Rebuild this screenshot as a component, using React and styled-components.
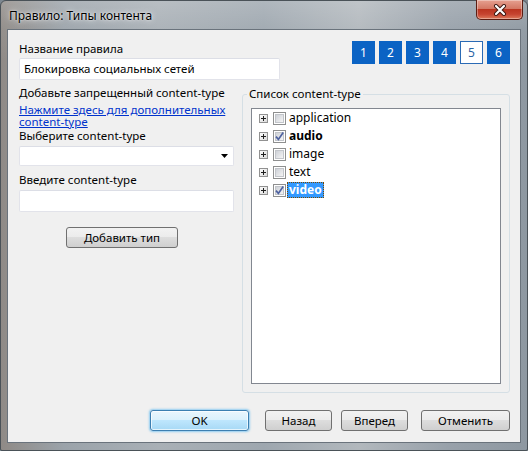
import React from "react";
import styled, { createGlobalStyle } from "styled-components";

const Global = createGlobalStyle`
  html, body { margin: 0; padding: 0; }
  body {
    width: 528px; height: 451px; overflow: hidden;
    background: #7d8790;
    font-family: "Noto Sans", "Open Sans", sans-serif;
    font-size: 11.5px;
    color: #000;
  }
  * { box-sizing: border-box; }
`;

const Frame = styled.div`
  width: 528px;
  height: 451px;
  display: flex;
  flex-direction: column;
  border: 1px solid #4a5258;
  border-radius: 6px 6px 2px 2px;
  background:
    linear-gradient(180deg, rgba(255,255,255,0.18) 0px, rgba(255,255,255,0.05) 28px, rgba(0,0,0,0) 60px),
    linear-gradient(90deg, #8f8a86 0%, #9ba3aa 12%, #a9b0b6 30%, #9ea7af 50%, #b2b8bd 68%, #98a1aa 85%, #8e98a1 100%);
`;

const TitleBar = styled.div`
  height: 28px;
  display: flex;
  align-items: flex-start;
  justify-content: space-between;
  padding: 0 4px 0 8px;
`;

const Title = styled.div`
  margin-top: 7px;
  font-size: 12px;
  line-height: 15px;
  color: #000;
  text-shadow: 0 0 6px rgba(255,255,255,0.9), 0 0 2px rgba(255,255,255,0.8);
`;

const CloseButton = styled.div`
  width: 47px;
  height: 20px;
  margin-top: -1px;
  border: 1px solid #5c1d12;
  border-top: none;
  border-radius: 0 0 5px 5px;
  display: flex;
  align-items: center;
  justify-content: center;
  background: linear-gradient(180deg, #e6a090 0%, #d47864 45%, #bb3520 50%, #c64430 75%, #dc7a5c 100%);
  box-shadow: inset 0 0 0 1px rgba(255,255,255,0.35);
`;

const Client = styled.div`
  flex: 1;
  margin: 0 6px 7px 6px;
  border: 1px solid #6a737c;
  background: #f0f0f0;
  padding: 11px 10px 0 11px;
  display: flex;
  flex-direction: column;
`;

const Header = styled.div`
  display: flex;
  justify-content: space-between;
  align-items: flex-start;
`;

const Field = styled.div`
  display: flex;
  flex-direction: column;
`;

const Label = styled.div`
  line-height: ${(p) => p.$lh || 14}px;
  margin-top: ${(p) => p.$mt || 0}px;
  white-space: nowrap;
`;

const TextBox = styled.div`
  width: ${(p) => p.$w}px;
  height: ${(p) => p.$h || 22}px;
  margin-top: ${(p) => p.$mt || 0}px;
  background: #fff;
  border: 1px solid #e2e3ea;
  border-top-color: #dcdee6;
  border-radius: 2px;
  padding: 0 4px;
  display: flex;
  align-items: center;
  line-height: 14px;
`;

const SelectBox = styled(TextBox)`
  justify-content: flex-end;
  padding-right: 5px;
`;

const Pager = styled.div`
  display: flex;
  gap: 4px;
`;

const PageButton = styled.div`
  width: 23px;
  height: 23px;
  display: flex;
  align-items: center;
  justify-content: center;
  font-size: 12px;
  background: ${(p) => (p.$active ? "#ffffff" : "#0b63c4")};
  color: ${(p) => (p.$active ? "#2c64a4" : "#ffffff")};
  border: 1px solid ${(p) => (p.$active ? "#2a6ab5" : "#0b63c4")};
`;

const Body = styled.div`
  display: grid;
  grid-template-columns: 215px 268px;
  column-gap: 8px;
  margin-top: 6px;
`;

const LeftCol = styled.div`
  display: flex;
  flex-direction: column;
  align-items: flex-start;
`;

const Link = styled.a`
  display: block;
  margin-top: 4px;
  width: 215px;
  line-height: 12px;
  color: #0033cc;
  text-decoration: underline;
  cursor: pointer;
`;

const Button = styled.div`
  width: ${(p) => p.$w}px;
  height: 21px;
  margin-left: ${(p) => p.$ml || 0}px;
  margin-top: ${(p) => p.$mt || 0}px;
  border: 1px solid ${(p) => (p.$default ? "#3c7fb1" : "#707070")};
  border-radius: 3px;
  display: flex;
  align-items: center;
  justify-content: center;
  line-height: 14px;
  color: #000;
  background: ${(p) =>
    p.$default
      ? "linear-gradient(180deg, #eaf6fd 0%, #d9f0fc 50%, #bee6fd 50%, #a7d9f5 100%)"
      : "linear-gradient(180deg, #f2f2f2 0%, #ebebeb 50%, #dddddd 50%, #cfcfcf 100%)"};
  box-shadow: inset 0 0 0 1px ${(p) => (p.$default ? "rgba(255,255,255,0.7)" : "rgba(255,255,255,0.8)")},
    ${(p) => (p.$default ? "0 0 2px 1px rgba(80,180,240,0.6)" : "none")};
`;

const Group = styled.fieldset`
  margin: 1px 0 0 0;
  padding: 7px 8px 8px 8px;
  border: 1px solid #d5dfe5;
  border-radius: 3px;
  min-width: 0;
`;

const Legend = styled.legend`
  padding: 0 2px;
  margin-left: -4px;
  line-height: 14px;
`;

const Tree = styled.div`
  height: 276px;
  background: #fff;
  border: 1px solid #828790;
  padding: 0 0 0 7px;
  display: flex;
  flex-direction: column;
`;

const TreeRow = styled.div`
  height: 18px;
  display: flex;
  align-items: center;
`;

const Expander = styled.svg`
  width: 9px;
  height: 9px;
  flex: none;
`;

const Check = styled.svg`
  width: 13px;
  height: 13px;
  margin-left: 5px;
  flex: none;
`;

const ItemText = styled.span`
  margin-left: 1px;
  padding: 0 1px;
  height: 16px;
  line-height: 14px;
  font-size: 12px;
  font-weight: ${(p) => (p.$bold ? 700 : 400)};
  color: ${(p) => (p.$selected ? "#fff" : "#000")};
  background: ${(p) => (p.$selected ? "#3399ff" : "transparent")};
  border: 1px dotted ${(p) => (p.$selected ? "#7a4a00" : "transparent")};
`;

const Footer = styled.div`
  display: flex;
  justify-content: flex-end;
  margin-top: 17px;
`;

const PlusIcon = () => (
  <Expander viewBox="0 0 9 9">
    <defs>
      <linearGradient id="exg" x1="0" y1="0" x2="1" y2="1">
        <stop offset="0" stopColor="#ffffff" />
        <stop offset="1" stopColor="#d8d8d8" />
      </linearGradient>
    </defs>
    <rect x="0.5" y="0.5" width="8" height="8" fill="url(#exg)" stroke="#919191" />
    <path d="M2 4.5H7M4.5 2V7" stroke="#1e1e1e" strokeWidth="1" />
  </Expander>
);

const CheckBox = ({ checked }) => (
  <Check viewBox="0 0 13 13">
    <defs>
      <linearGradient id="cbg" x1="0" y1="0" x2="1" y2="1">
        <stop offset="0" stopColor="#cbcfd5" />
        <stop offset="1" stopColor="#f7f7f7" />
      </linearGradient>
    </defs>
    <rect x="0.5" y="0.5" width="12" height="12" fill="#fff" stroke="#8e8f8f" />
    <rect x="2.5" y="2.5" width="8" height="8" fill="url(#cbg)" stroke="#c2c5ca" />
    {checked && (
      <path d="M3 6.6L5.4 9.4L10.2 2.6" fill="none" stroke="#4e62a0" strokeWidth="1.7" />
    )}
  </Check>
);

const items = [
  { name: "application" },
  { name: "audio", checked: true, bold: true },
  { name: "image" },
  { name: "text" },
  { name: "video", checked: true, bold: true, selected: true },
];

export default function App() {
  return (
    <>
      <Global />
      <Frame>
        <TitleBar>
          <Title>Правило: Типы контента</Title>
          <CloseButton>
            <svg width="16" height="12" viewBox="0 0 16 12">
              <path d="M4 2L12 10M12 2L4 10" stroke="#3b1710" strokeWidth="4" strokeLinecap="round" />
              <path d="M4 2L12 10M12 2L4 10" stroke="#ffffff" strokeWidth="2.2" strokeLinecap="round" />
            </svg>
          </CloseButton>
        </TitleBar>
        <Client>
          <Header>
            <Field>
              <Label $lh={15}>Название правила</Label>
              <TextBox $w={261} $mt={2}>Блокировка социальных сетей</TextBox>
            </Field>
            <Pager>
              {[1, 2, 3, 4, 5, 6].map((n) => (
                <PageButton key={n} $active={n === 5}>{n}</PageButton>
              ))}
            </Pager>
          </Header>
          <Body>
            <LeftCol>
              <Label>Добавьте запрещенный content-type</Label>
              <Link>Нажмите здесь для дополнительных content-type</Link>
              <Label $lh={14} $mt={1}>Выберите content-type</Label>
              <SelectBox $w={215} $h={20} $mt={3}>
                <svg width="7" height="4" viewBox="0 0 7 4">
                  <path d="M0 0H7L3.5 4Z" fill="#000" />
                </svg>
              </SelectBox>
              <Label $mt={7}>Введите content-type</Label>
              <TextBox $w={215} $mt={3} />
              <Button $w={112} $ml={47} $mt={15}>Добавить тип</Button>
            </LeftCol>
            <Group>
              <Legend>Список content-type</Legend>
              <Tree>
                {items.map((it) => (
                  <TreeRow key={it.name}>
                    <PlusIcon />
                    <CheckBox checked={it.checked} />
                    <ItemText $bold={it.bold} $selected={it.selected}>{it.name}</ItemText>
                  </TreeRow>
                ))}
              </Tree>
            </Group>
          </Body>
          <Footer>
            <Button $w={99} $default>OK</Button>
            <Button $w={67} $ml={16}>Назад</Button>
            <Button $w={67} $ml={9}>Вперед</Button>
            <Button $w={89} $ml={13}>Отменить</Button>
          </Footer>
        </Client>
      </Frame>
    </>
  );
}
